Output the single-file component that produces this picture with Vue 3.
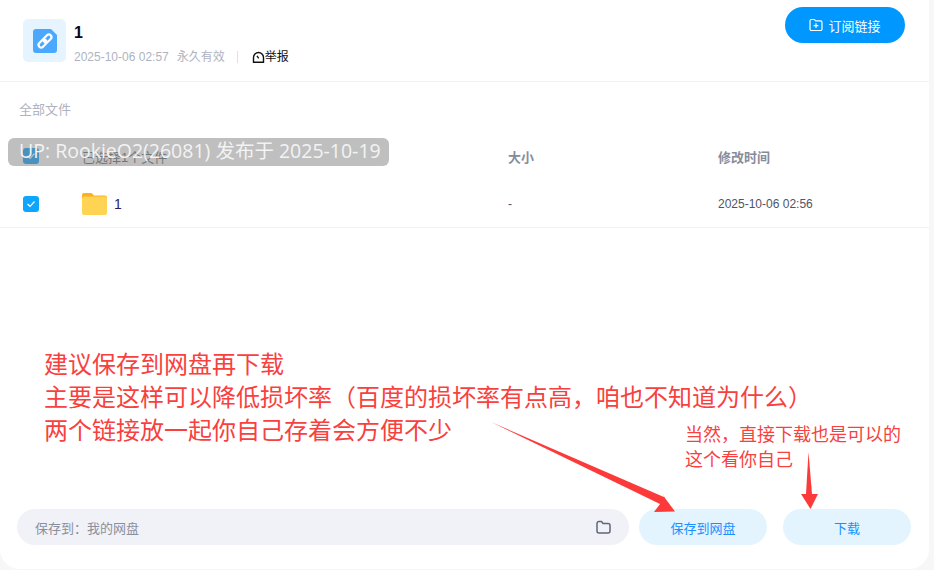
<script setup>
const cjk = 'x'
</script>

<template>
  <div class="page">
    <main class="card">
      <header class="head">
        <div class="file-icon">
          <svg width="26" height="26" viewBox="0 0 26 26">
            <path d="M4 1h15l6 6v15a3 3 0 0 1-3 3H4a3 3 0 0 1-3-3V4a3 3 0 0 1 3-3z" fill="#4aa8ff"/>
            <g fill="none" stroke="#fff" stroke-width="2.2" stroke-linecap="round" transform="rotate(-45 13 13)">
              <rect x="5" y="10.4" width="9" height="5.2" rx="2.6"/>
              <rect x="12" y="10.4" width="9" height="5.2" rx="2.6"/>
            </g>
          </svg>
        </div>
        <div class="meta">
          <div class="name">1</div>
          <div class="sub">
            <span>2025-10-06 02:57</span>
            <span class="expire">永久有效</span>
            <i class="sep"></i>
            <span class="report">
              <svg width="13" height="13" viewBox="0 0 13 13" fill="none" stroke="#111" stroke-width="1.4">
                <path d="M1.5 11.2V6.5a5 5 0 0 1 10 0v4.700z"/>
                <path d="M5 4.800l1.700 2.500"/>
              </svg>举报
            </span>
          </div>
        </div>
        <button class="subscribe">
          <svg width="14" height="14" viewBox="0 0 14 14" fill="none" stroke="#fff" stroke-width="1.2">
            <path d="M1 3a1.500 1.500 0 0 1 1.500-1.500h3l1.200 1.300h4.800A1.500 1.500 0 0 1 13 4.300v6.700a1.500 1.500 0 0 1-1.500 1.500h-9A1.500 1.500 0 0 1 1 11z"/>
            <path d="M7 5.200v4.800M4.600 7.600h4.800"/>
          </svg>
          订阅链接
        </button>
      </header>

      <div class="crumb">全部文件</div>

      <div class="thead">
        <div class="c-check"><span class="check dark"><svg width="10" height="8" viewBox="0 0 10 8"><path d="M1.500 4l2.500 2.300L8.500 1.500" fill="none" stroke="#fff" stroke-width="1.200"/></svg></span></div>
        <div class="c-name sel">已选择1个文件</div>
        <div class="c-size">大小</div>
        <div class="c-time">修改时间</div>
      </div>

      <div class="row">
        <div class="c-check"><span class="check"><svg width="10" height="8" viewBox="0 0 10 8"><path d="M1.500 4l2.500 2.300L8.500 1.500" fill="none" stroke="#fff" stroke-width="1.200"/></svg></span></div>
        <div class="c-name file">
          <svg width="25" height="22" viewBox="0 0 25 22">
            <path d="M2 0h7.500l2.500 2.500h11a2 2 0 0 1 2 2V8H0V2a2 2 0 0 1 2-2z" fill="#fdb022"/>
            <rect x="0" y="3.500" width="25" height="18.500" rx="2" fill="#ffd452"/>
          </svg>
          <span class="fname">1</span>
        </div>
        <div class="c-size val">-</div>
        <div class="c-time val">2025-10-06 02:56</div>
      </div>

      <footer class="foot">
        <div class="path">
          <span>保存到：我的网盘</span>
          <svg width="15" height="14" viewBox="0 0 15 14" fill="none" stroke="#5f6779" stroke-width="1.500">
            <path d="M1 3.500A2 2 0 0 1 3 1.500h2.500l1.500 2h5a2 2 0 0 1 2 2v5.500a2 2 0 0 1-2 2H3a2 2 0 0 1-2-2z"/>
          </svg>
        </div>
        <button class="action save">保存到网盘</button>
        <button class="action dl">下载</button>
      </footer>
    </main>

    <div class="watermark">UP: RookieO2(26081) 发布于 2025-10-19</div>

    <div class="note big">建议保存到网盘再下载<br>主要是这样可以降低损坏率（百度的损坏率有点高，咱也不知道为什么）<br>两个链接放一起你自己存着会方便不少</div>
    <div class="note small">当然，直接下载也是可以的<br>这个看你自己</div>

    <svg class="arrows" width="934" height="570" viewBox="0 0 934 570">
      <path d="M491 422L665 497.500L662 494L675 511.500L654 512L660 504Z" fill="#fc3a3a"/>
      <path d="M808.500 452L812 494L818 494L810.500 509L801 494L806 494Z" fill="#fc3a3a"/>
    </svg>
  </div>
</template>

<style scoped>
.page {
  position: relative;
  width: 934px;
  height: 570px;
  overflow: hidden;
  background: #f7f7f8;
  font-family: "Liberation Sans", "Noto Sans CJK SC", sans-serif;
}
.card {
  width: 929px;
  height: 569px;
  background: #fff;
  border-radius: 0 0 20px 20px;
  display: flex;
  flex-direction: column;
}
.head {
  height: 82px;
  box-sizing: border-box;
  border-bottom: 1px solid #f1f2f7;
  display: flex;
  align-items: flex-start;
  padding: 19px 24px 0 23px;
}
.file-icon {
  width: 43px;
  height: 43px;
  background: #e6f4ff;
  border-radius: 5px;
  display: flex;
  align-items: center;
  justify-content: center;
}
.meta {
  margin-left: 8px;
  flex: 1;
}
.name {
  font-size: 16px;
  font-weight: 700;
  line-height: 22px;
  margin-top: 3px;
  color: #03081a;
}
.sub {
  display: flex;
  align-items: center;
  margin-top: 4px;
  font-size: 12px;
  line-height: 18px;
  color: #afb3bf;
}
.expire { margin-left: 8px; }
.sep {
  width: 1px;
  height: 12px;
  background: #dfe1e6;
  margin: 0 14px 0 12px;
}
.report {
  display: flex;
  align-items: center;
  color: #111;
}
.subscribe {
  width: 120px;
  height: 36px;
  margin-top: -12px;
  border: 0;
  border-radius: 18px;
  background: #0098ff;
  color: #fff;
  font: inherit;
  font-size: 13px;
  display: flex;
  align-items: center;
  justify-content: center;
  gap: 5px;
  padding: 0;
}
.crumb {
  font-size: 13px;
  line-height: 18px;
  color: #afb3bf;
  margin: 19px 0 0 19px;
}
.thead, .row {
  display: flex;
  align-items: center;
}
.thead {
  height: 50px;
  margin-top: 12px;
  font-size: 13px;
  font-weight: 700;
  color: #878c9c;
}
.row {
  height: 46px;
  border-bottom: 1px solid #f1f2f4;
}
.c-check {
  width: 82px;
  padding-left: 23px;
  box-sizing: border-box;
  display: flex;
}
.c-name { width: 426px; }
.c-size { width: 210px; }
.c-time { flex: 1; }
.sel { color: #6a6a70; font-weight: 400; }
.check {
  width: 16px;
  height: 16px;
  border-radius: 3px;
  background: #0ea5ff;
  display: flex;
  align-items: center;
  justify-content: center;
}
.file {
  display: flex;
  align-items: center;
  gap: 7px;
}
.fname {
  font-size: 14px;
  color: #2d1b5e;
}
.val {
  font-size: 12px;
  color: #4e5569;
}
.foot {
  margin-top: auto;
  margin-bottom: 24px;
  margin-left: 17px;
  display: flex;
  align-items: center;
  height: 36px;
}
.path {
  width: 612px;
  height: 36px;
  box-sizing: border-box;
  border-radius: 18px;
  background: #f1f2f7;
  display: flex;
  align-items: center;
  justify-content: space-between;
  padding: 0 18px;
  font-size: 13px;
  color: #8b8f9c;
}
.action {
  width: 128px;
  height: 36px;
  border: 0;
  padding: 0;
  border-radius: 18px;
  background: #e3f4ff;
  color: #1a90ff;
  font: inherit;
  font-size: 13px;
}
.save { margin-left: 10px; }
.dl { margin-left: 16px; }
.watermark {
  position: absolute;
  left: 8px;
  top: 138px;
  width: 381px;
  height: 28px;
  box-sizing: border-box;
  padding-left: 11px;
  border-radius: 6px;
  background: rgba(128, 128, 128, 0.5);
  color: #f3f3f3;
  font-family: "Open Sans", "Noto Sans CJK SC", sans-serif;
  font-size: 19.500px;
  line-height: 26px;
  white-space: nowrap;
}
.note {
  position: absolute;
  color: #f8413e;
  white-space: nowrap;
  font-family: "Noto Sans CJK SC", sans-serif;
}
.big {
  left: 44px;
  top: 346px;
  font-size: 24px;
  line-height: 33px;
}
.small {
  left: 685px;
  top: 421px;
  font-size: 18px;
  line-height: 25px;
}
.arrows {
  position: absolute;
  left: 0;
  top: 0;
  pointer-events: none;
}
</style>
